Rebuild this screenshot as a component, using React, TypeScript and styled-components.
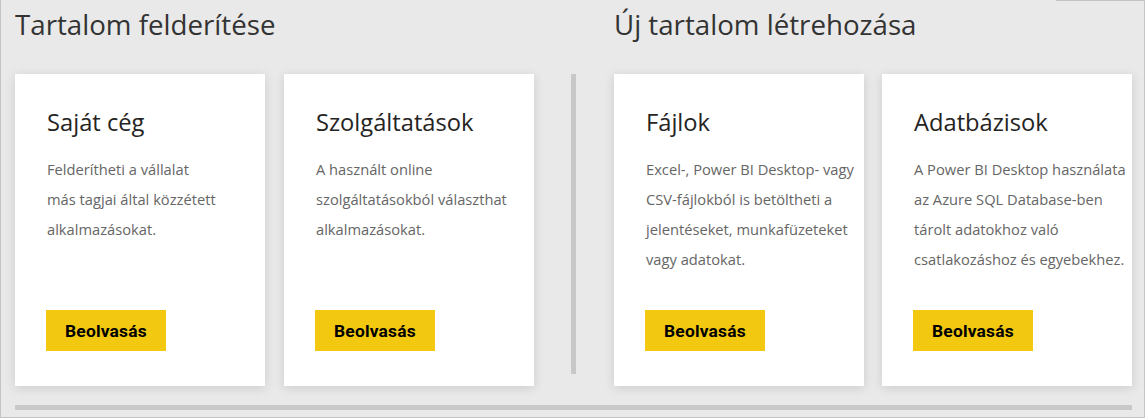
import React from "react";
import styled, { createGlobalStyle } from "styled-components";

const GlobalStyle = createGlobalStyle`
  html, body {
    margin: 0;
    padding: 0;
    background: #e9e9e9;
  }
  * { box-sizing: border-box; }
`;

const Frame = styled.div`
  position: relative;
  width: 1145px;
  height: 418px;
  background: #e9e9e9;
  border-left: 1px solid #c4c4c4;
  border-right: 1px solid #c4c4c4;
  border-bottom: 1px solid #c4c4c4;
  padding: 6px 12px 0 14px;
  font-family: "Open Sans", "Noto Sans", sans-serif;
  display: flex;
  flex-direction: column;

  &::before {
    content: "";
    position: absolute;
    top: 0;
    left: 1055px;
    right: 0;
    height: 1px;
    background: #c4c4c4;
  }
`;

const Layout = styled.div`
  display: grid;
  grid-template-columns: 519px 37px 5px 38px 518px;
  grid-template-rows: 36px 312px;
  row-gap: 32px;
`;

const SectionHeading = styled.h1<{ $col: number }>`
  grid-column: ${(p) => p.$col};
  grid-row: 1;
  margin: 0;
  font-size: 27.7px;
  line-height: 36px;
  font-weight: 400;
  color: #333333;
  white-space: nowrap;
`;

const CardGroup = styled.div<{ $col: number; $gap: number }>`
  grid-column: ${(p) => p.$col};
  grid-row: 2;
  display: grid;
  grid-template-columns: 250px 250px;
  column-gap: ${(p) => p.$gap}px;
`;

const Divider = styled.div`
  grid-column: 3;
  grid-row: 2;
  width: 5px;
  height: 300px;
  background: #c8c8c8;
`;

const Card = styled.div`
  background: #ffffff;
  box-shadow: 0 2px 10px rgba(0, 0, 0, 0.13);
  padding: 32px 8px 35px 32px;
  display: flex;
  flex-direction: column;
  align-items: flex-start;
  overflow: hidden;
`;

const CardTitle = styled.h2`
  margin: 0 0 16px;
  font-size: 23.7px;
  line-height: 32px;
  font-weight: 400;
  color: #252423;
  white-space: nowrap;
`;

const CardText = styled.p`
  margin: 0;
  flex: 1;
  font-size: 14.7px;
  line-height: 30px;
  color: #666666;
  white-space: nowrap;
`;

const ScanButton = styled.button`
  height: 41px;
  margin-left: -1px;
  padding: 0 19px 0 19px;
  border: none;
  background: #f2c811;
  color: #000000;
  font-family: "Roboto", "Liberation Sans", sans-serif;
  font-weight: 700;
  font-size: 17.4px;
  letter-spacing: 0.2px;
  cursor: pointer;
`;

const BottomBar = styled.div`
  margin-top: 19px;
  width: 1117px;
  height: 5px;
  background: #c8c8c8;
`;

type CardData = { title: string; lines: string[] };

const discover: CardData[] = [
  { title: "Saját cég", lines: ["Felderítheti a vállalat", "más tagjai által közzétett", "alkalmazásokat."] },
  { title: "Szolgáltatások", lines: ["A használt online", "szolgáltatásokból választhat", "alkalmazásokat."] },
];

const create: CardData[] = [
  {
    title: "Fájlok",
    lines: ["Excel-, Power BI Desktop- vagy", "CSV-fájlokból is betöltheti a", "jelentéseket, munkafüzeteket", "vagy adatokat."],
  },
  {
    title: "Adatbázisok",
    lines: ["A Power BI Desktop használata", "az Azure SQL Database-ben", "tárolt adatokhoz való", "csatlakozáshoz és egyebekhez."],
  },
];

const ContentCard: React.FC<{ data: CardData }> = ({ data }) => (
  <Card>
    <CardTitle>{data.title}</CardTitle>
    <CardText>
      {data.lines.map((l, i) => (
        <React.Fragment key={i}>
          {l}
          {i < data.lines.length - 1 && <br />}
        </React.Fragment>
      ))}
    </CardText>
    <ScanButton>Beolvasás</ScanButton>
  </Card>
);

export default function App() {
  return (
    <>
      <GlobalStyle />
      <Frame>
        <Layout>
          <SectionHeading $col={1}>Tartalom felderítése</SectionHeading>
          <SectionHeading $col={5}>Új tartalom létrehozása</SectionHeading>
          <CardGroup $col={1} $gap={19}>
            {discover.map((c) => (
              <ContentCard key={c.title} data={c} />
            ))}
          </CardGroup>
          <Divider />
          <CardGroup $col={5} $gap={18}>
            {create.map((c) => (
              <ContentCard key={c.title} data={c} />
            ))}
          </CardGroup>
        </Layout>
        <BottomBar />
      </Frame>
    </>
  );
}
